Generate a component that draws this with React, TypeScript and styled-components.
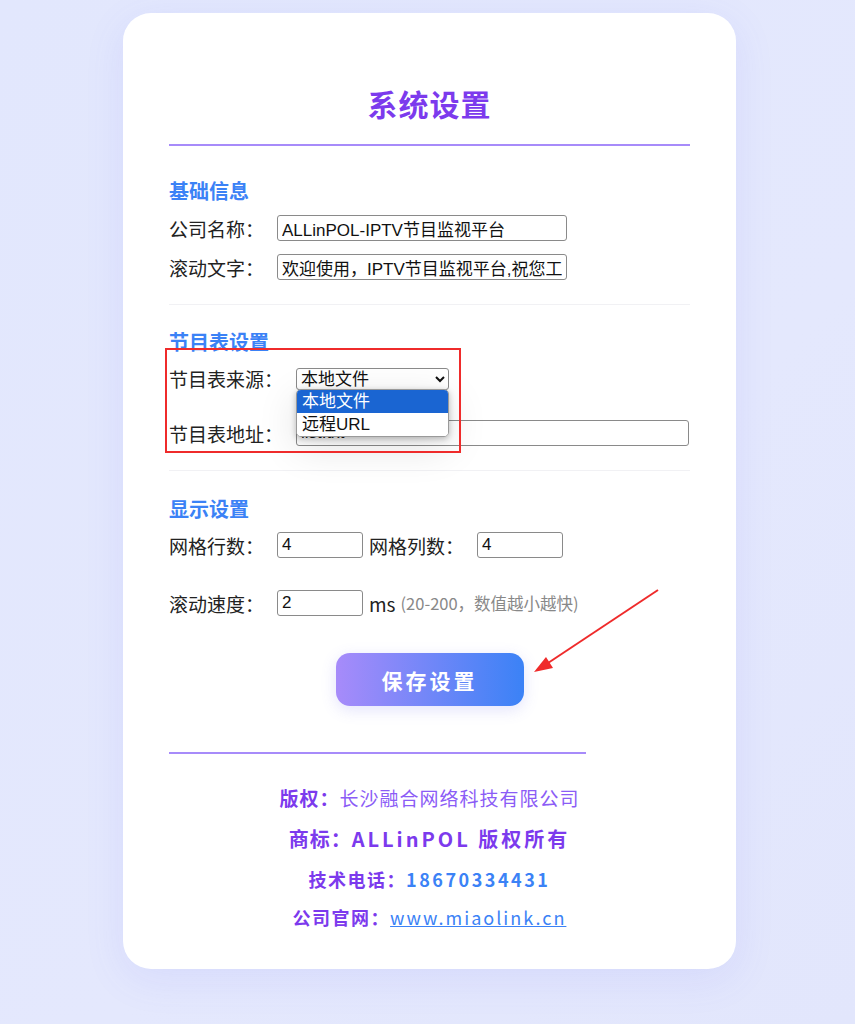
import React from "react"
import styled, { createGlobalStyle } from "styled-components"

const GlobalStyle = createGlobalStyle`
  html, body {
    margin: 0;
    padding: 0;
  }
  body {
    min-height: 100vh;
    background: linear-gradient(135deg, #e2e7fd 0%, #e4e8fd 60%, #e2e6fc 100%);
    font-family: "Noto Sans CJK SC", "Liberation Sans", sans-serif;
  }
`

const Page = styled.div`
  display: flex;
  justify-content: center;
  padding: 13px 0 57px 4px;
`

const Card = styled.div`
  position: relative;
  width: 613px;
  box-sizing: border-box;
  padding: 48px 46px 38px;
  background: #fff;
  border-radius: 28px;
  box-shadow: 0 10px 40px rgba(99, 102, 241, 0.1);
`

const Title = styled.h1`
  margin: 24px 0 0;
  padding-bottom: 23px;
  border-bottom: 2px solid #a78bfa;
  text-align: center;
  font-size: 30px;
  line-height: 36px;
  font-weight: 700;
  color: #7c3aed;
  letter-spacing: 1px;
`

const Section = styled.div<{ $pt: number; $last?: boolean }>`
  padding-top: ${p => p.$pt}px;
  padding-bottom: ${p => (p.$last ? 0 : 24)}px;
  border-bottom: ${p => (p.$last ? "none" : "1px solid #f1f1f4")};
`

const SectionTitle = styled.h3`
  margin: 0;
  font-size: 20px;
  line-height: 28px;
  font-weight: 700;
  color: #3b82f6;
`

const Row = styled.div<{ $mt: number }>`
  position: relative;
  display: flex;
  align-items: center;
  height: 26px;
  margin-top: ${p => p.$mt}px;
`

const Label = styled.label<{ $ml?: number }>`
  font-size: 19px;
  color: #222;
  margin-left: ${p => p.$ml ?? 0}px;
  margin-right: 13px;
  white-space: nowrap;
`

const Input = styled.input<{ $w: number }>`
  box-sizing: border-box;
  width: ${p => p.$w}px;
  height: 26px;
  padding: 1px 4px;
  border: 1px solid #8a8a8a;
  border-radius: 3px;
  font-family: "Liberation Sans", "Noto Sans CJK SC", sans-serif;
  font-size: 17px;
  color: #111;
  background: #fff;
`

const SelectWrap = styled.div`
  position: relative;
`

const Select = styled.select`
  box-sizing: border-box;
  width: 153px;
  height: 22px;
  border: 1px solid #8a8a8a;
  border-radius: 3px;
  font-family: "Liberation Sans", "Noto Sans CJK SC", sans-serif;
  font-size: 17px;
  color: #111;
  background: #fff;
`

const Popup = styled.ul`
  position: absolute;
  left: 0;
  top: 23px;
  z-index: 5;
  width: 151px;
  margin: 0;
  padding: 0;
  list-style: none;
  background: #fff;
  border: 1px solid #9a9a9a;
  border-radius: 5px;
  overflow: hidden;
  box-shadow: 0 2px 6px rgba(0, 0, 0, 0.25), 0 10px 40px rgba(0, 0, 0, 0.12);
`

const PopupItem = styled.li<{ $active?: boolean }>`
  height: 23px;
  line-height: 23px;
  padding-left: 5px;
  font-family: "Liberation Sans", "Noto Sans CJK SC", sans-serif;
  font-size: 17px;
  color: ${p => (p.$active ? "#fff" : "#111")};
  background: ${p => (p.$active ? "#1a65d2" : "#fff")};
`

const Unit = styled.span`
  margin-left: 6px;
  font-size: 19px;
  color: #222;
`

const Hint = styled.span`
  margin-left: 5px;
  font-size: 16.5px;
  color: #888;
`

const SaveButton = styled.button`
  display: block;
  width: 188px;
  height: 53px;
  margin: 37px auto 0;
  border: none;
  border-radius: 14px;
  background: linear-gradient(90deg, #a78bfa 0%, #3b82f6 100%);
  color: #fff;
  font-family: "Noto Sans CJK SC", sans-serif;
  font-size: 21px;
  font-weight: 700;
  letter-spacing: 3px;
  box-shadow: 0 4px 15px rgba(99, 102, 241, 0.18);
  cursor: pointer;
`

const FooterLine = styled.div`
  width: 80%;
  height: 2px;
  margin-top: 46px;
  background: #a78bfa;
`

const Footer = styled.div`
  margin-top: 30px;
  text-align: center;
`

const FooterText = styled.p<{ $size: number; $mt?: number }>`
  margin: ${p => p.$mt ?? 0}px 0 0;
  font-size: ${p => p.$size}px;
  line-height: 28px;
  color: #7c3aed;
`

const Strong = styled.b<{ $ls?: number }>`
  font-weight: 700;
  color: #7c3aed;
  letter-spacing: ${p => p.$ls ?? 1}px;
`

const Soft = styled.span`
  color: #8b5cf6;
  letter-spacing: 1px;
`

const Phone = styled.span`
  color: #3b82f6;
  font-weight: 700;
  letter-spacing: 2.5px;
`

const Link = styled.a`
  color: #3b82f6;
  letter-spacing: 2px;
  text-decoration: underline;
`

const Mark = styled.div`
  position: absolute;
  left: 42px;
  top: 335px;
  width: 296px;
  height: 105px;
  box-sizing: border-box;
  border: 2px solid #ef2b2b;
  pointer-events: none;
  z-index: 6;
`

const Arrow = styled.svg`
  position: absolute;
  left: 405px;
  top: 570px;
  z-index: 6;
  pointer-events: none;
`

export default function App() {
  return (
    <>
      <GlobalStyle />
      <Page>
        <Card>
          <Title>系统设置</Title>

          <Section $pt={31}>
            <SectionTitle>基础信息</SectionTitle>
            <Row $mt={10}>
              <Label>公司名称：</Label>
              <Input $w={290} defaultValue="ALLinPOL-IPTV节目监视平台" />
            </Row>
            <Row $mt={13}>
              <Label>滚动文字：</Label>
              <Input $w={290} defaultValue="欢迎使用，IPTV节目监视平台,祝您工作愉快！" />
            </Row>
          </Section>

          <Section $pt={23}>
            <SectionTitle>节目表设置</SectionTitle>
            <Row $mt={9}>
              <Label>节目表来源：</Label>
              <SelectWrap>
                <Select defaultValue="local">
                  <option value="local">本地文件</option>
                  <option value="url">远程URL</option>
                </Select>
                <Popup>
                  <PopupItem $active>本地文件</PopupItem>
                  <PopupItem>远程URL</PopupItem>
                </Popup>
              </SelectWrap>
            </Row>
            <Row $mt={29}>
              <Label>节目表地址：</Label>
              <Input $w={393} defaultValue="list.txt" />
            </Row>
          </Section>

          <Section $pt={24} $last>
            <SectionTitle>显示设置</SectionTitle>
            <Row $mt={9}>
              <Label>网格行数：</Label>
              <Input $w={86} defaultValue="4" />
              <Label $ml={6}>网格列数：</Label>
              <Input $w={86} defaultValue="4" />
            </Row>
            <Row $mt={32}>
              <Label>滚动速度：</Label>
              <Input $w={86} defaultValue="2" />
              <Unit>ms</Unit>
              <Hint>(20-200，数值越小越快)</Hint>
            </Row>
          </Section>

          <SaveButton>保存设置</SaveButton>

          <FooterLine />
          <Footer>
            <FooterText $size={19}>
              <Strong>版权：</Strong>
              <Soft>长沙融合网络科技有限公司</Soft>
            </FooterText>
            <FooterText $size={20} $mt={13}>
              <Strong>商标：</Strong>
              <Strong $ls={3}>ALLinPOL 版权所有</Strong>
            </FooterText>
            <FooterText $size={18} $mt={12}>
              <Strong $ls={1.5}>技术电话：</Strong>
              <Phone>18670334431</Phone>
            </FooterText>
            <FooterText $size={18} $mt={10}>
              <Strong $ls={1.5}>公司官网：</Strong>
              <Link href="#">www.miaolink.cn</Link>
            </FooterText>
          </Footer>

          <Mark />
          <Arrow width="140" height="100" viewBox="0 0 140 100">
            <line x1="130" y1="7" x2="14" y2="84" stroke="#ef2b2b" strokeWidth="2" />
            <polygon points="6,89 18,74 25,85" fill="#ef2b2b" />
          </Arrow>
        </Card>
      </Page>
    </>
  )
}
